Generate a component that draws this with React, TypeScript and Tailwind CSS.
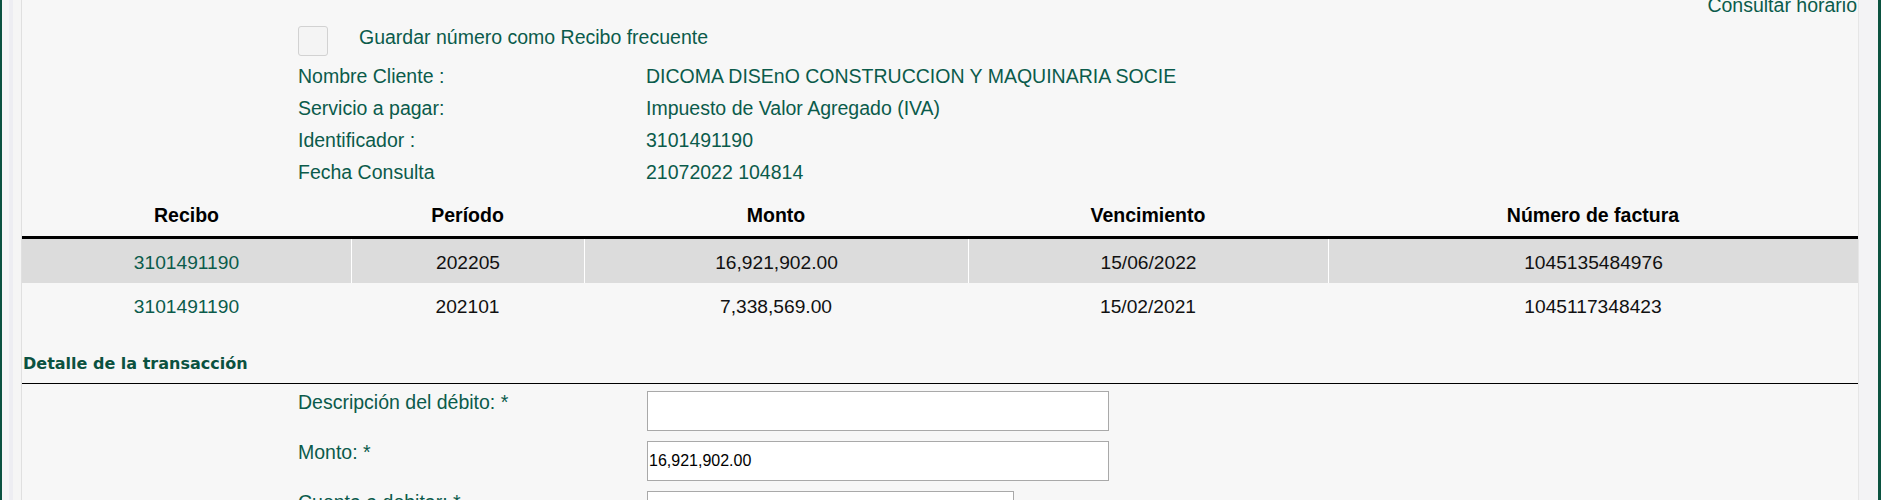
import React from "react";

const green = "text-[#0b5b4b]";

function InfoRow({ label, value }: { label: string; value: string }) {
  return (
    <div className="flex h-[32px] leading-[32px]">
      <div className={`w-[348px] ${green}`}>{label}</div>
      <div className={green}>{value}</div>
    </div>
  );
}

const cols = ["Recibo", "Período", "Monto", "Vencimiento", "Número de factura"];
const rows = [
  ["3101491190", "202205", "16,921,902.00", "15/06/2022", "1045135484976"],
  ["3101491190", "202101", "7,338,569.00", "15/02/2021", "1045117348423"],
];

export default function App() {
  return (
    <div
      className="w-[1881px] h-[500px] overflow-hidden flex bg-[#f7f7f7] text-[19.5px]"
      style={{ fontFamily: '"Liberation Sans", Arial, sans-serif' }}
    >
      <div className="w-[2px] shrink-0 bg-[#0b5240]" />
      <div className="w-[19px] shrink-0 flex">
        <div className="w-[7px] bg-[#f5f5f5]" />
        <div className="w-[4px] bg-[#ededf2]" />
        <div className="w-[8px] bg-[#f5f5f5]" />
      </div>
      <div className="w-[1px] shrink-0 bg-[#e0e0e0]" />

      <main className="w-[1836px] shrink-0">
        <div className={`-mt-[6px] h-[22px] leading-[22px] text-right pr-[1px] ${green}`}>
          Consultar horario
        </div>

        <div className="mt-[10px] flex items-start pl-[276px]">
          <div className="w-[30px] h-[30px] rounded-[3px] border border-[#d2d2d2] bg-[#f4f4f4]" />
          <div className={`ml-[31px] leading-[22px] ${green}`}>
            Guardar número como Recibo frecuente
          </div>
        </div>

        <div className="mt-[4px] pl-[276px]">
          <InfoRow label="Nombre Cliente :" value="DICOMA DISEnO CONSTRUCCION Y MAQUINARIA SOCIE" />
          <InfoRow label="Servicio a pagar:" value="Impuesto de Valor Agregado (IVA)" />
          <InfoRow label="Identificador :" value="3101491190" />
          <InfoRow label="Fecha Consulta" value="21072022 104814" />
        </div>

        <div className="grid grid-cols-[329px_233px_384px_360px_530px]">
          {cols.map((c) => (
            <div
              key={c}
              className="pt-[16px] pb-[10px] leading-[22px] text-center font-bold text-black border-b-[3px] border-black"
            >
              {c}
            </div>
          ))}
          {rows.map((r, ri) =>
            r.map((v, ci) => (
              <div
                key={`${ri}-${ci}`}
                className={`h-[44px] pt-[13px] leading-[22px] text-[19.2px] text-center ${
                  ri === 0 ? "bg-[#dcdcdc]" : ""
                } ${ci > 0 && ri === 0 ? "border-l border-white" : ""} ${
                  ci === 0 ? green : "text-[#111]"
                }`}
              >
                {v}
              </div>
            ))
          )}
        </div>

        <div
          className="mt-[27px] pb-[9px] border-b border-black text-[16px] leading-[20px] font-bold text-[#0b5240] pl-[1px]"
          style={{ fontFamily: '"DejaVu Sans", Verdana, sans-serif' }}
        >
          Detalle de la transacción
        </div>

        <div className="mt-[7px] pl-[276px] flex flex-col gap-[10px]">
          <div className="flex items-start">
            <div className={`w-[349px] leading-[22px] ${green}`}>Descripción del débito: *</div>
            <div className="w-[462px] h-[40px] border border-[#a9a9a9] bg-white" />
          </div>
          <div className="flex items-start">
            <div className={`w-[349px] leading-[22px] ${green}`}>Monto: *</div>
            <div className="w-[462px] h-[40px] border border-[#a9a9a9] bg-white flex items-center pl-[1px] text-[16px] text-black">
              16,921,902.00
            </div>
          </div>
          <div className="flex items-start">
            <div className={`w-[349px] leading-[22px] ${green}`}>Cuenta a debitar: *</div>
            <div className="w-[367px] h-[40px] border border-[#a9a9a9] bg-white" />
          </div>
        </div>
      </main>

      <div className="w-[1px] shrink-0 bg-[#e6e6e6]" />
      <div className="w-[19px] shrink-0 bg-[#f3f3f5]" />
      <div className="w-[3px] shrink-0 bg-[#0b5240]" />
    </div>
  );
}
